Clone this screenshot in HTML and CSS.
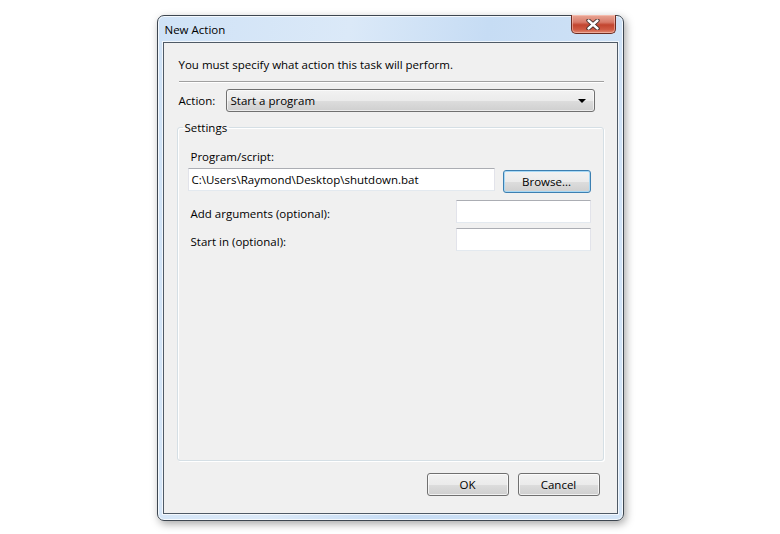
FILE: index.html
```
<!DOCTYPE html>
<html>
<head>
  <title>New Action</title>
  <link rel="stylesheet" href="styles.css">
</head>
<body>
  <div class="window">
    <div class="titleBar">
      <span class="title">New Action</span>
      <div class="closeButton">
        <svg width="14" height="11" viewBox="0 0 14 11">
          <path d="M2.5 1.5 L11.5 9.5 M11.5 1.5 L2.5 9.5" stroke="#3b2a28" stroke-width="4.2" stroke-linecap="round"/>
          <path d="M2.5 1.5 L11.5 9.5 M11.5 1.5 L2.5 9.5" stroke="#ffffff" stroke-width="2.4" stroke-linecap="round"/>
        </svg>
      </div>
    </div>
    <div class="client">
      <p class="intro">You must specify what action this task will perform.</p>
      <div class="separator"></div>
      <div class="actionRow">
        <span class="actionLabel">Action:</span>
        <div class="combo">
          <span>Start a program</span>
          <span class="comboArrow"></span>
        </div>
      </div>
      <fieldset class="settings">
        <legend>Settings</legend>
        <p class="fieldLabel">Program/script:</p>
        <div class="programRow">
          <div class="textBox programBox">C:\Users\Raymond\Desktop\shutdown.bat</div>
          <button class="winButton browseButton">Browse...</button>
        </div>
        <div class="optionRow argsRow">
          <span class="optionLabel">Add arguments (optional):</span>
          <div class="textBox smallBox"></div>
        </div>
        <div class="optionRow startRow">
          <span class="optionLabel">Start in (optional):</span>
          <div class="textBox smallBox"></div>
        </div>
      </fieldset>
      <div class="dialogButtons">
        <button class="winButton">OK</button>
        <button class="winButton">Cancel</button>
      </div>
    </div>
  </div>
</body>
</html>
```

FILE: styles.css
```
* {
  margin: 0;
  box-sizing: border-box;
}

body {
  height: 534px;
  display: flex;
  align-items: center;
  justify-content: center;
  background-color: #ffffff;
  font-family: "Open Sans", "Noto Sans", Arial, sans-serif;
  font-size: 11.5px;
  color: #000000;
}

/* window frame */
.window {
  width: 467px;
  height: 506px;
  margin-top: 2px;
  padding: 0 5px 6px 5px;
  display: flex;
  flex-direction: column;
  border: 1px solid #3d4650;
  border-radius: 7px;
  background: linear-gradient(100deg, #cfe2f6 0%, #dbe9f8 35%, #c6dcf4 60%, #d4e5f7 100%);
  box-shadow: inset 0 0 0 1px rgba(255, 255, 255, 0.75), 2px 3px 9px rgba(0, 0, 0, 0.35);
}

.titleBar {
  height: 26px;
  display: flex;
  align-items: flex-start;
}

.title {
  padding: 6px 0 0 2px;
  line-height: 16px;
}

.closeButton {
  width: 45px;
  height: 19px;
  margin: -1px 2px 0 auto;
  display: flex;
  align-items: center;
  justify-content: center;
  border: 1px solid #6b2c22;
  border-top: none;
  border-radius: 0 0 5px 5px;
  background: linear-gradient(#e9a796 0%, #d87a69 40%, #c2452f 55%, #cf5a43 80%, #e08a73 100%);
  box-shadow: inset 0 0 0 1px rgba(255, 210, 200, 0.5);
}

.client {
  flex: 1;
  display: flex;
  flex-direction: column;
  padding: 15px 13px 17px 13px;
  border: 1px solid #4f5a66;
  background-color: #f0f0f0;
  box-shadow: 0 0 0 1px rgba(255, 255, 255, 0.7);
}

.intro {
  margin: -1px 0 0 2px;
  line-height: 15px;
}

.separator {
  height: 2px;
  margin: 9px 0 0 2px;
  border-top: 1px solid #a0a0a0;
  border-bottom: 1px solid #ffffff;
}

.actionRow {
  display: flex;
  align-items: center;
  margin-top: 6px;
}

.actionLabel {
  width: 47px;
  margin-left: 2px;
}

.combo {
  width: 369px;
  height: 23px;
  display: flex;
  align-items: center;
  justify-content: space-between;
  padding: 0 8px 0 4px;
  border: 1px solid #707070;
  border-radius: 3px;
  background: linear-gradient(#f2f2f2 0%, #ebebeb 50%, #dddddd 51%, #cfcfcf 100%);
  box-shadow: inset 0 0 0 1px rgba(255, 255, 255, 0.6);
}

.comboArrow {
  width: 0;
  height: 0;
  border-left: 4px solid transparent;
  border-right: 4px solid transparent;
  border-top: 4px solid #000000;
}

/* settings group */
.settings {
  flex: 1;
  margin-top: 8px;
  padding: 0 12px 0 10px;
  border: 1px solid #d5dfe5;
  border-radius: 3px;
  box-shadow: inset 1px 1px 0 #ffffff, 1px 1px 0 #ffffff;
}

.settings legend {
  margin-left: -5px;
  padding: 0 2px;
  line-height: 15px;
}

.fieldLabel {
  margin: 14px 0 0 3px;
  line-height: 15px;
}

.textBox {
  height: 23px;
  padding: 3px 0 0 3px;
  border: 1px solid #e2e3ea;
  border-top-color: #abadb3;
  border-bottom-color: #e3e9ef;
  background-color: #ffffff;
  line-height: 15px;
  white-space: nowrap;
}

.programRow {
  display: flex;
  align-items: flex-start;
  margin-top: 4px;
}

.programBox {
  width: 307px;
}

.winButton {
  height: 23px;
  border: 1px solid #707070;
  border-radius: 3px;
  background: linear-gradient(#f2f2f2 0%, #ebebeb 50%, #dddddd 51%, #cfcfcf 100%);
  box-shadow: inset 0 0 0 1px rgba(255, 255, 255, 0.7);
  font-family: inherit;
  font-size: inherit;
  color: #000000;
  padding: 0;
}

.browseButton {
  width: 88px;
  margin: 2px 0 0 8px;
  border-color: #3c7fb1;
  box-shadow: inset 0 0 0 1px #a7d8f5;
}

.optionRow {
  display: flex;
  align-items: center;
  justify-content: space-between;
}

.argsRow {
  margin-top: 7px;
}

.startRow {
  margin-top: 5px;
}

.optionLabel {
  margin-left: 3px;
  padding-top: 3px;
}

.smallBox {
  width: 135px;
}

.dialogButtons {
  display: flex;
  justify-content: flex-end;
  gap: 9px;
  margin: 12px 4px 0 0;
}

.dialogButtons .winButton {
  width: 82px;
}
```
